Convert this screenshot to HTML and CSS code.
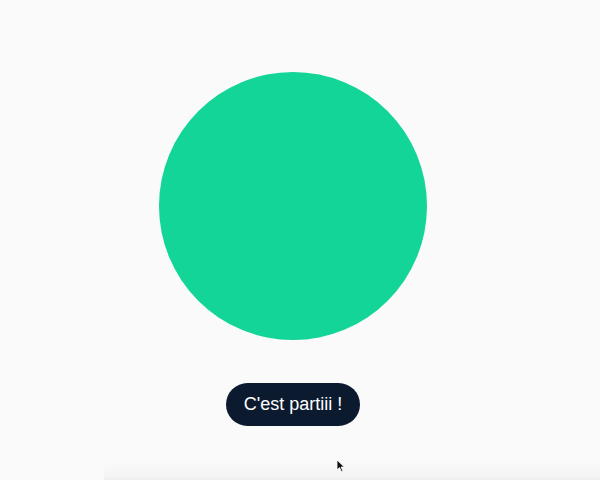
FILE: index.html
```html
<!DOCTYPE html>
<html lang="fr">
<head>
<meta charset="utf-8">
<link rel="stylesheet" href="styles.css">
</head>
<body>
<main class="stage">
  <div class="circle"></div>
  <button class="go">C'est partiii !</button>
</main>
<div class="shelf"></div>
<svg class="cursor" width="10" height="14" viewBox="0 0 10 14"><path d="M1 1 L1 11 L3.5 8.6 L5.4 12.6 L6.9 11.9 L5.1 8 L8.4 8 Z" fill="#111" stroke="#fff" stroke-width="0.8"/></svg>
</body>
</html>
```
FILE: styles.css
```css
html, body {
  margin: 0;
  height: 100%;
  background: #fafafa;
  overflow: hidden;
}
body {
  position: relative;
  font-family: "Liberation Sans", Arial, sans-serif;
}
.stage {
  display: flex;
  flex-direction: column;
  align-items: center;
  padding-top: 72px;
  padding-right: 14px;
  gap: 43px;
}
.circle {
  width: 268px;
  height: 268px;
  border-radius: 50%;
  background: #12d597;
}
.go {
  font-family: "Liberation Sans", Arial, sans-serif;
  font-size: 18px;
  line-height: 21px;
  color: #ffffff;
  background: #0c1a2f;
  border: none;
  border-radius: 22px;
  padding: 11px 18px;
  height: 43px;
  white-space: nowrap;
  cursor: pointer;
}
.shelf {
  position: absolute;
  left: 104px;
  right: 0;
  bottom: 0;
  height: 18px;
  background: linear-gradient(to bottom, #fafafa 0%, #f4f4f4 75%, #ededed 100%);
  border-radius: 10px 0 0 0;
}
.cursor {
  position: absolute;
  left: 336px;
  top: 459px;
}
```
